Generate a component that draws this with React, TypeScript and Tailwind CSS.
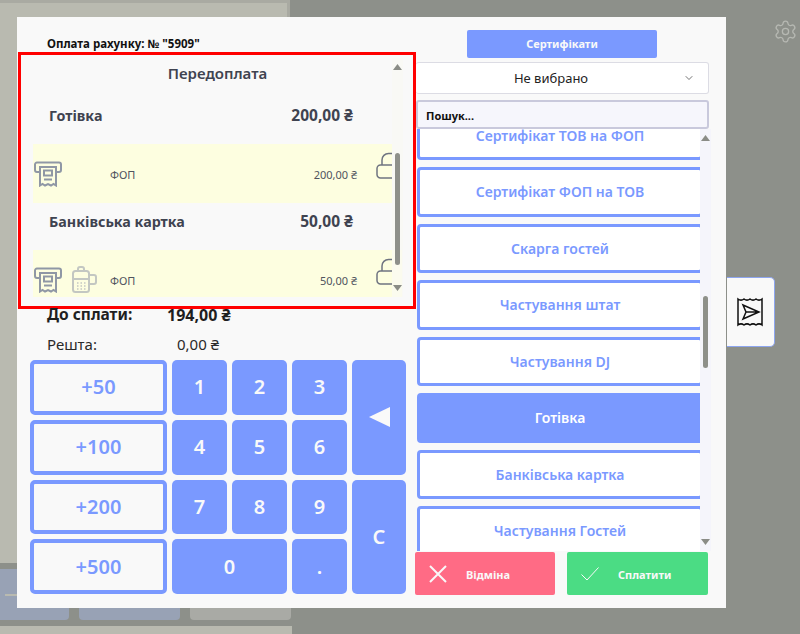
import React from 'react';
import { ChevronDown, Settings } from 'lucide-react';

const methods = [
  { name: 'Сертифікат ТОВ на ФОП' },
  { name: 'Сертифікат ФОП на ТОВ' },
  { name: 'Скарга гостей' },
  { name: 'Частування штат' },
  { name: 'Частування DJ' },
  { name: 'Готівка', active: true },
  { name: 'Банківська картка' },
  { name: 'Частування Гостей' },
];

const ReceiptIcon = () => (
  <svg width="28" height="26" viewBox="0 0 28 26" fill="none" stroke="#8f97a5" strokeWidth="2" className="shrink-0">
    <path d="M6 11H3a2 2 0 0 1-2-2V3.500a2 2 0 0 1 2-2h22a2 2 0 0 1 2 2V9a2 2 0 0 1-2 2h-3" />
    <path d="M6 6h16v18.500l-2.500-1.500-2.500 1.500-3-1.500-3 1.500-2.500-1.500L6 24.500z" />
    <path d="M10 9.500h8v5h-8zM10 18.500h8" />
  </svg>
);

const TerminalIcon = () => (
  <svg width="25" height="27" viewBox="0 0 25 27" fill="none" stroke="#c3c7c2" strokeWidth="2" className="shrink-0">
    <rect x="1" y="5" width="16" height="21" rx="2.500" />
    <path d="M6 5V3a2 2 0 0 1 2-2h2a2 2 0 0 1 2 2v2M1 13h16M17 9h5a2 2 0 0 1 2 2v5a2 2 0 0 1-2 2h-5" />
    <path d="M5 17h1.500M8.500 17H10M12 17h1.500M5 20h1.500M8.500 20H10M12 20h1.500M5 23h1.500M8.500 23H10M12 23h1.500" strokeWidth="1.500" />
  </svg>
);

const OpenLock = () => (
  <svg width="16" height="28" viewBox="0 0 16 28" fill="none" stroke="#6f7480" strokeWidth="1.500" className="shrink-0">
    <path d="M16 13H4.500A3.500 3.500 0 0 0 1 16.500v6A3.500 3.500 0 0 0 4.500 26H16" />
    <path d="M6 13V8a6.500 6.500 0 0 1 6.500-6.500H16" />
  </svg>
);

function PayRow({ name, sum, terminal, clipped }: { name: string; sum: string; terminal?: boolean; clipped?: boolean }) {
  return (
    <>
      <div className="flex h-[47px] items-center justify-between pb-[10px] pl-4 pr-[49px] font-bold text-[#3f4350]">
        <span className="text-[14.3px]">{name}</span>
        <span className="text-[15.500px]">{sum} ₴</span>
      </div>
      <div className={`flex items-center bg-[#fdfee0] text-[11px] text-[#50545e] ${clipped ? 'h-[47px] w-[369px] pr-[45px]' : 'h-[59px] w-[359px] pr-[35px]'}`}>
        <div className={`flex w-[77px] shrink-0 items-center gap-[10px] pl-px ${clipped ? 'pt-[12px]' : ''}`}>
          <ReceiptIcon />
          {terminal && <TerminalIcon />}
        </div>
        <span className={`flex-1 ${clipped ? 'pt-[15px]' : 'pt-[3px]'}`}>ФОП</span>
        <span className={clipped ? 'pt-[15px]' : 'pt-[3px]'}>{sum} ₴</span>
      </div>
    </>
  );
}

function Scrollbar({ thumb, track }: { thumb: string; track: string }) {
  return (
    <div className={`absolute flex w-[11px] flex-col items-center ${track}`}>
      <svg width="9" height="6" viewBox="0 0 9 6" className="absolute top-[6px]"><path d="M4.500 0L9 6H0z" fill="#8a8c86" /></svg>
      <div className={`absolute w-[5px] rounded-full bg-[#8e908a] ${thumb}`} />
      <svg width="9" height="6" viewBox="0 0 9 6" className="absolute bottom-[6px]"><path d="M0 0h9L4.500 6z" fill="#8a8c86" /></svg>
    </div>
  );
}

function NumKey({ label, className = '' }: { label: React.ReactNode; className?: string }) {
  return (
    <button className={`flex items-center justify-center rounded-[5px] bg-[#7a99ff] text-[20px] font-semibold text-[#f9f9f9] ${className}`}>
      {label}
    </button>
  );
}

function AddKey({ label }: { label: string }) {
  return (
    <button className="rounded-[5px] border-4 border-[#7a99ff] text-[20px] font-semibold text-[#7a99ff]">
      {label}
    </button>
  );
}

export default function App() {
  return (
    <div className="relative h-[634px] w-[800px] overflow-hidden bg-[#8d908a] font-['Noto_Sans',sans-serif]">
      {/* page behind the dialog */}
      <div className="h-[563px] w-[290px] border-r-[3px] border-t-[3px] border-[#a9aaa2] bg-[#b9bab0]" />
      <div className="mt-[6px] flex h-[51px] w-[291px] gap-[10px]">
        <div className="relative w-[69px] rounded-br-sm bg-[#98a2b5]">
          <div className="absolute left-[5px] top-[25px] h-[2px] w-[12px] bg-[#b9bab0]" />
        </div>
        <div className="w-[101px] rounded-b-sm bg-[#98a2b5]" />
        <div className="w-[101px] rounded-b-sm bg-[#a9aaa5]" />
      </div>
      <div className="mt-[6px] h-[8px] w-[292px] bg-[#b9bab0]" />

      <Settings size={25} strokeWidth={1.25} className="absolute left-[773px] top-[19px] text-[#b6b8b2]" />

      {/* dialog */}
      <div className="absolute left-[17px] top-[17px] flex h-[591px] w-[709px] bg-[#f9f9f9]">
        {/* left side */}
        <div className="w-[399px] shrink-0">
          <div className="flex h-[35px] items-end pl-[30px] text-[11.500px] font-bold leading-[16px] text-[#111]">
            Оплата рахунку: № "5909"
          </div>
          <div className="relative ml-px h-[257px] w-[398px] border-[3px] border-[#ff0000] bg-[#f9f9f9]">
            <div className="ml-[12px] h-[242px] w-[369px] overflow-hidden">
              <div className="flex h-[42px] items-center justify-center pb-[5px] text-[15px] font-semibold text-[#3f4350]">
                Передоплата
              </div>
              <PayRow name="Готівка" sum="200,00" />
              <PayRow name="Банківська картка" sum="50,00" terminal clipped />
            </div>
            <div className="absolute left-[355px] top-[97px]">
              <OpenLock />
            </div>
            <div className="absolute left-[355px] top-[203px]">
              <OpenLock />
            </div>
            <Scrollbar track="left-[371px] top-[3px] h-[239px] bg-[#f9f9f4]/70" thumb="top-[95px] h-[112px]" />
          </div>

          <div className="relative -mt-[4px] flex h-[20px] items-center pl-[30px] font-bold text-[#1f1f1f]">
            <span className="w-[120px] text-[15.500px]">До сплати:</span>
            <span className="text-[16px]">194,00 ₴</span>
          </div>
          <div className="mt-[4px] flex h-[30px] items-center pl-[30px] text-[15px] text-[#2a2a2a]">
            <span className="w-[130px]">Решта:</span>
            <span>0,00 ₴</span>
          </div>

          <div className="ml-[13px] mt-[1px] grid h-[234px] w-[376px] grid-cols-[137px_55px_55px_55px_54px] grid-rows-4 gap-[5px]">
            <AddKey label="+50" />
            <NumKey label="1" />
            <NumKey label="2" />
            <NumKey label="3" />
            <NumKey
              className="row-span-2"
              label={<svg width="21" height="20" viewBox="0 0 21 20"><path d="M0 10L21 0v20z" fill="#f9f9f9" /></svg>}
            />
            <AddKey label="+100" />
            <NumKey label="4" />
            <NumKey label="5" />
            <NumKey label="6" />
            <AddKey label="+200" />
            <NumKey label="7" />
            <NumKey label="8" />
            <NumKey label="9" />
            <NumKey className="row-span-2" label="C" />
            <AddKey label="+500" />
            <NumKey className="col-span-2" label="0" />
            <NumKey label="." />
          </div>
        </div>

        {/* right side */}
        <div className="relative w-[293px] shrink-0 pt-[13px]">
          <button className="ml-[51px] flex h-[28px] w-[190px] items-center justify-center rounded-[2px] bg-[#7a99ff] text-[11px] font-bold text-[#f9f9f9]">
            Сертифікати
          </button>
          <div className="relative mt-[4px] flex h-[32px] items-center justify-center rounded-[3px] border-y border-r border-[#dcdce4] bg-white pr-[22px] pt-[1px] text-[13px] text-[#222]">
            <span>Не вибрано</span>
            <ChevronDown size={12} strokeWidth={1.5} className="absolute right-[13px] top-[9px] text-[#444]" />
          </div>
          <div className="mt-[6px] flex h-[29px] items-center rounded-[3px] border-2 border-[#c9c9dc] bg-[#f6f6fc] pl-[8px] pt-[3px] text-[11px] font-bold text-[#111]">
            Пошук...
          </div>
          <div className="relative h-[422px]">
            <div className="ml-px h-full w-[283px] overflow-hidden">
              <div className="-mt-[18.500px] flex w-[286px] flex-col gap-[7px]">
                {methods.map((m) => (
                  <button
                    key={m.name}
                    className={`h-[49.500px] shrink-0 rounded-[4px] border-[3px] border-[#7a99ff] text-[14px] font-semibold ${m.active ? 'bg-[#7a99ff] text-white' : 'bg-white text-[#7a99ff]'}`}
                  >
                    {m.name}
                  </button>
                ))}
              </div>
            </div>
            <Scrollbar track="left-[284px] top-0 h-[422px] bg-[#f5f5fb]" thumb="top-[167px] h-[72px]" />
          </div>

          {/* action buttons sit over the end of the list */}
          <div className="absolute bottom-[13px] left-[-1px] flex w-[293px] gap-[12px]">
            <button className="flex h-[43px] w-[140px] items-center rounded-[2px] bg-[#ff6b85] pl-[14px] text-[11px] font-bold text-[#f9f9f9]">
              <svg width="18" height="18" viewBox="0 0 18 18" stroke="#f9f9f9" strokeWidth="2" className="mr-[19px]"><path d="M1 1l16 16M17 1L1 17" /></svg>
              <span className="pt-[3px]">Відміна</span>
            </button>
            <button className="flex h-[43px] w-[141px] items-center rounded-[2px] bg-[#4bdc84] pl-[14px] text-[11px] font-bold text-[#f9f9f9]">
              <svg width="18" height="14" viewBox="0 0 18 14" fill="none" stroke="#f9f9f9" strokeWidth="1" className="mr-[19px]"><path d="M0.500 7.500L6 13 17.500 0.500" /></svg>
              <span className="pt-[3px]">Сплатити</span>
            </button>
          </div>
        </div>
      </div>

      {/* side tab */}
      <div className="absolute left-[727px] top-[277px] flex h-[70px] w-[48px] items-center justify-center rounded-r-[5px] border-y border-r border-[#8ea6f0] bg-[#f9f9f9] pr-[2px]">
        <svg width="28" height="30" viewBox="0 0 28 30" fill="none" stroke="#111" strokeWidth="1.500">
          <path d="M2 2c2 1.500 4 1.500 6 0 2 1.500 4 1.500 6 0 2 1.500 4 1.500 6 0 2 1.500 4 1.500 6 0v26c-2-1.500-4-1.500-6 0-2-1.500-4-1.500-6 0-2-1.500-4-1.500-6 0-2-1.500-4-1.500-6 0z" />
          <path d="M7 8l16 7-16 7 3-7zM10 15h13" />
        </svg>
      </div>
    </div>
  );
}
